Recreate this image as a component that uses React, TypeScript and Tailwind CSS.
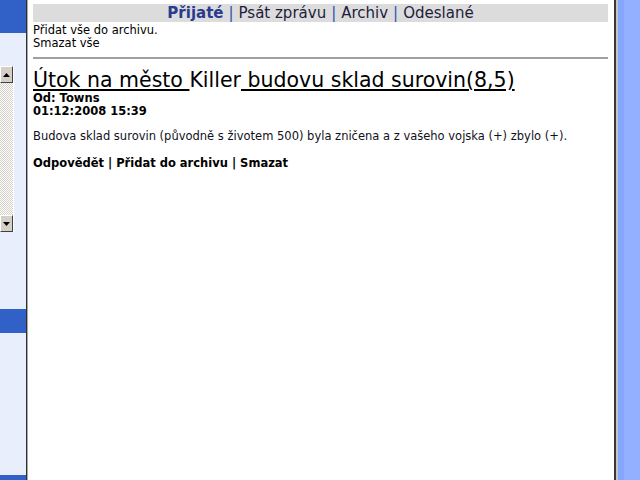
export default function App() {
  return (
    <div className="flex h-[480px] w-[640px] overflow-hidden bg-white font-['DejaVu_Sans',Verdana,sans-serif] text-black">
      {/* left frame */}
      <div className="flex w-[26px] flex-col bg-[#e8eefb]">
        <div className="h-[33px] bg-[#3160c6]" />
        <div className="mt-[33px] flex h-[166px] w-[14px] flex-col border-r border-white">
          <div className="flex h-[17px] items-center justify-center border border-[#404040] border-t-white border-l-white bg-[#d4d0c8]">
            <svg width="7" height="4" viewBox="0 0 7 4">
              <path d="M3.5 0 L7 4 L0 4 Z" fill="#000" />
            </svg>
          </div>
          <div className="flex-1 bg-[repeating-conic-gradient(#d4d0c8_0_25%,#ffffff_0_50%)] bg-[length:2px_2px]" />
          <div className="flex h-[17px] items-center justify-center border border-[#404040] border-t-white border-l-white bg-[#d4d0c8]">
            <svg width="7" height="4" viewBox="0 0 7 4">
              <path d="M0 0 L7 0 L3.5 4 Z" fill="#000" />
            </svg>
          </div>
        </div>
        <div className="mt-[77px] h-[24px] bg-[#3160c6]" />
        <div className="flex-1" />
        <div className="h-[5px] bg-[#3160c6]" />
      </div>
      <div className="w-[1px] bg-[#303030]" />
      <div className="w-[1px] bg-[#a8a8a8]" />

      {/* message frame */}
      <div className="flex-1 pl-[5px] pr-[6px] pt-[4px]">
        <div className="flex h-[18px] items-center justify-center bg-[#dcdcdc] text-[15px] leading-none text-[#1c1c3c]">
          <span className="font-bold text-[#2a3b8f]">Přijaté</span>
          <span className="mx-[5px] text-[#3050b0]">|</span>
          <span>Psát zprávu</span>
          <span className="mx-[5px] text-[#3050b0]">|</span>
          <span>Archiv</span>
          <span className="mx-[5px] text-[#3050b0]">|</span>
          <span>Odeslané</span>
        </div>
        <div className="mt-[2px] text-[11.5px] leading-[13px]">
          <div>Přidat vše do archivu.</div>
          <div>Smazat vše</div>
        </div>
        <hr className="mt-[7px] border-t-2 border-[#a0a0a0] border-b-[#e0e0e0]" />
        <div className="mt-[9px] text-[20.5px] leading-[24px]">
          <span className="underline underline-offset-2">Útok na město </span>
          <span>Killer</span>
          <span className="underline underline-offset-2"> budovu sklad surovin(8,5)</span>
        </div>
        <div className="text-[11.5px] font-bold leading-[13px]">
          <div>Od: Towns</div>
          <div>01:12:2008 15:39</div>
        </div>
        <p className="mt-[11px] text-[11.5px] leading-[14px] text-[#101020]">
          Budova sklad surovin (původně s životem 500) byla zničena a z vašeho vojska (+) zbylo (+).
        </p>
        <div className="mt-[13px] text-[11.5px] font-bold leading-[14px]">
          Odpovědět | Přidat do archivu | Smazat
        </div>
      </div>

      {/* right edge */}
      <div className="w-[2px] bg-[#383838]" />
      <div className="w-[2px] bg-[#c4c4c4]" />
      <div className="w-[6px] bg-[#84a6ff]" />
      <div className="w-[16px] bg-[#92b0ff]" />
    </div>
  );
}
